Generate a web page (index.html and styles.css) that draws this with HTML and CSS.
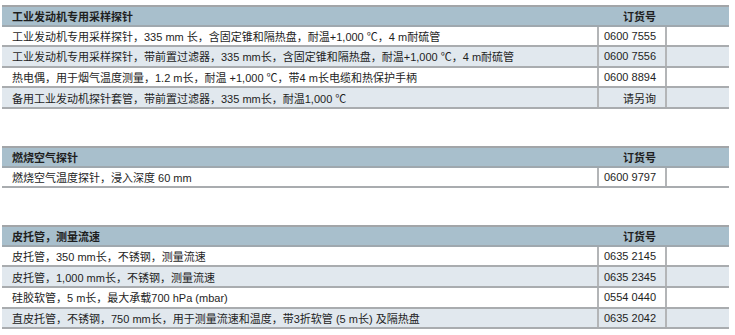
FILE: index.html
```html
<!DOCTYPE html>
<html lang="zh">
<head>
<meta charset="utf-8">
<link rel="stylesheet" href="styles.css">
</head>
<body>
<div class="page">
  <div class="tbl">
    <div class="row head"><div class="desc">工业发动机专用采样探针</div><div class="code">订货号</div><div class="extra"></div></div>
    <div class="row"><div class="desc">工业发动机专用采样探针，335 mm 长，含固定锥和隔热盘，耐温+1,000 ℃，4 m耐硫管</div><div class="code">0600 7555</div><div class="extra"></div></div>
    <div class="row alt"><div class="desc">工业发动机专用采样探针，带前置过滤器，335 mm长，含固定锥和隔热盘，耐温+1,000 ℃，4 m耐硫管</div><div class="code">0600 7556</div><div class="extra"></div></div>
    <div class="row"><div class="desc">热电偶，用于烟气温度测量，1.2 m长，耐温 +1,000 ℃，带4 m长电缆和热保护手柄</div><div class="code">0600 8894</div><div class="extra"></div></div>
    <div class="row alt"><div class="desc">备用工业发动机探针套管，带前置过滤器，335 mm长，耐温1,000 ℃</div><div class="code">请另询</div><div class="extra"></div></div>
  </div>
  <div class="tbl">
    <div class="row head"><div class="desc">燃烧空气探针</div><div class="code">订货号</div><div class="extra"></div></div>
    <div class="row"><div class="desc">燃烧空气温度探针，浸入深度 60 mm</div><div class="code">0600 9797</div><div class="extra"></div></div>
  </div>
  <div class="tbl">
    <div class="row head"><div class="desc">皮托管，测量流速</div><div class="code">订货号</div><div class="extra"></div></div>
    <div class="row"><div class="desc">皮托管，350 mm长，不锈钢，测量流速</div><div class="code">0635 2145</div><div class="extra"></div></div>
    <div class="row alt"><div class="desc">皮托管，1,000 mm长，不锈钢，测量流速</div><div class="code">0635 2345</div><div class="extra"></div></div>
    <div class="row"><div class="desc">硅胶软管，5 m长，最大承载700 hPa (mbar)</div><div class="code">0554 0440</div><div class="extra"></div></div>
    <div class="row alt"><div class="desc">直皮托管，不锈钢，750 mm长，用于测量流速和温度，带3折软管 (5 m长) 及隔热盘</div><div class="code">0635 2042</div><div class="extra"></div></div>
  </div>
</div>
</body>
</html>
```
FILE: styles.css
```css
html, body {
  margin: 0;
  padding: 0;
  background: #ffffff;
}
.page {
  padding: 5px 6px 0 2px;
  display: flex;
  flex-direction: column;
  gap: 37px;
  font-family: "Liberation Sans", "Noto Sans CJK SC", sans-serif;
  font-size: 11px;
  color: #1e1e1e;
}
.tbl {
  border-top: 2px solid #a2a5a8;
}
.row {
  display: grid;
  grid-template-columns: 1fr 70px 62px;
  height: 20.65px;
  box-sizing: border-box;
  border-bottom: 2px solid #a9acaf;
  background: #ffffff;
}
.row.alt {
  background: #e1e8ee;
}
.row.head {
  background: #a8bfcc;
  font-weight: bold;
  height: 19.5px;
  border-bottom: 2px solid #9fa8ae;
}
.desc {
  display: flex;
  align-items: center;
  padding-left: 10px;
  white-space: nowrap;
}
.code {
  display: flex;
  align-items: center;
  justify-content: flex-end;
  padding-right: 9px;
  border-left: 2px solid #b3b5b7;
  border-right: 2px solid #b3b5b7;
}
.head .code {
  border-color: transparent;
}
```
